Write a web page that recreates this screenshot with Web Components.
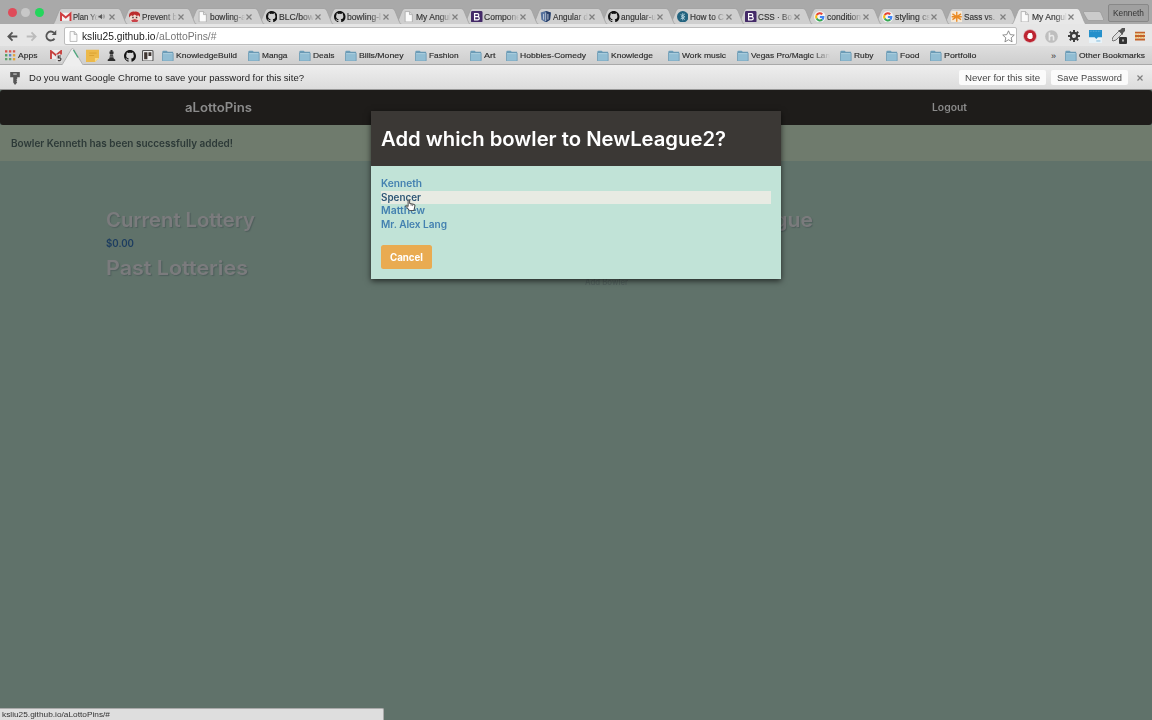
<!DOCTYPE html>
<html lang="en">
<head>
<meta charset="utf-8">
<title>My Angular App</title>
<style>
html,body{margin:0;height:100%;overflow:hidden}
body{font-family:"Liberation Sans",Arial,sans-serif;color:#222}
</style>
</head>
<body>
<browser-window></browser-window>
<script>
const define = (name, html, setup) => {
  const t = document.createElement('template');
  t.innerHTML = html;
  customElements.define(name, class extends HTMLElement {
    connectedCallback() {
      if (this.shadowRoot) return;
      const root = this.attachShadow({mode: 'open'});
      root.append(t.content.cloneNode(true));
      if (setup) setup.call(this, root);
    }
  });
};

/* Icon artwork, keyed by name */
const page = '<path d="M3 .8h6.2L13 4.6v10.6H3z" fill="#fbfbfb" stroke="#a2a2a2"/><path d="M9 1v4h4" fill="#ddd" stroke="#a2a2a2"/>';
const octo = '<path fill="#111" d="M8 0C3.6 0 0 3.6 0 8c0 3.5 2.3 6.500 5.500 7.600.4.1.5-.2.5-.4v-1.500c-2.200.5-2.700-1-2.700-1-.4-.9-.9-1.200-.9-1.200-.7-.5.1-.5.1-.5.8.1 1.200.8 1.200.8.7 1.300 1.900.9 2.300.7.1-.5.3-.9.5-1.100-1.800-.2-3.600-.9-3.600-4 0-.9.3-1.600.8-2.100-.1-.2-.4-1 .1-2.100 0 0 .7-.2 2.200.8a7.500 7.500 0 0 1 4 0c1.500-1 2.200-.8 2.200-.8.4 1.100.2 1.900.1 2.100.5.6.8 1.300.8 2.200 0 3.100-1.900 3.700-3.700 3.900.3.3.6.8.6 1.500v2.200c0 .2.1.5.6.4A8 8 0 0 0 16 8c0-4.400-3.600-8-8-8z"/>';
const google = '<circle cx="8" cy="8" r="8" fill="#f3f3f3"/><g fill="none" stroke-width="2.800"><path d="M3.700 5.500A5 5 0 0 1 11.500 4.500" stroke="#e64335"/><path d="M3.700 5.500a5 5 0 0 0 0 5" stroke="#f7b90a"/><path d="M3.700 10.500a5 5 0 0 0 7.800 1.300" stroke="#35a853"/><path d="M11.500 11.800Q13 10.500 13 8.200H8.200" stroke="#4285f4"/></g>';
const boot = '<rect width="16" height="16" rx="2" fill="#442a68"/><path d="M5 3.500h3.800a2.100 2.100 0 0 1 0 4.200H5zM5 7.700h4.200a2.300 2.300 0 0 1 0 4.600H5z" fill="none" stroke="#fff" stroke-width="1.700"/>';
const gmail = '<path d="M0 2.500h16v11H0z" fill="#f4f2f2"/><path d="M1.400 14V3.500L8 9l6.600-5.500V14" fill="none" stroke="#cf3b3e" stroke-width="2.700"/>';
const ICONS = {
  page, octo, google, boot, gmail,
  prevent: '<rect x="1" y="1" width="14" height="14" rx="3" fill="#f0d9d0"/><path d="M0 9C-1 3 3 0 8 1c5-1 9 3 8 8l-3-3-2 1-3-2-3 2-2-1z" fill="#bb2c2d"/><path d="M3 13l5-2 5 2-2 3H5z" fill="#c9434a"/><path d="M4.500 9h2m3 0h2" stroke="#433" stroke-width="2"/>',
  angular: '<path d="M8 0l7 2-1 10-6 4-6-4L1 2z" fill="#54709b"/><path d="M8 0l7 2-1 10-6 4z" fill="#243c66"/><path d="M5 12V4m6 8V4M8 2v12" stroke="#c7d2e0" stroke-width="1.300"/>',
  howto: '<circle cx="8" cy="8" r="8" fill="#23637f"/><path d="M8 3v10M5 5l6 3-6 3M11 4L6 8l5 4" fill="none" stroke="#b5d4df" stroke-width="1.200"/>',
  sass: '<rect width="16" height="16" rx="2" fill="#f5e9d8"/><path d="M8 1v14M2 4l12 8M14 4L2 12M1 8h14" stroke="#ea8a23" stroke-width="1.900"/>',
  close: '<path d="M3 3l10 10M13 3L3 13" stroke="#7f7f7f" stroke-width="2.400"/>',
  audio: '<path d="M1 6h3l5-4v12l-5-4H1z" fill="#555"/><path d="M11 5q2 3 0 6M13 3q4 5 0 10" fill="none" stroke="#555"/>',
  back: '<path d="M15 8H2M8 2L2 8l6 6" fill="none" stroke="currentColor" stroke-width="2.600"/>',
  fwd: '<path d="M1 8h13M8 2l6 6-6 6" fill="none" stroke="currentColor" stroke-width="2.600"/>',
  reload: '<path d="M12.700 11.500A6 6 0 1 1 12 3.700" fill="none" stroke="#555" stroke-width="2.400"/><path d="M9 6.500h6V0z" fill="#555"/>',
  star: '<path d="M8 1l2.100 4.700 5 .5-3.800 3.400 1.100 5L8 12l-4.400 2.600 1.100-5L.9 6.200l5-.5z" fill="#fff" stroke="#777"/>',
  stop: '<circle cx="8" cy="8" r="7.800" fill="#d9a0a5"/><circle cx="8" cy="8" r="7" fill="#bd2431"/><path d="M5 7.500l1.500-3h3.500l1 3v2.500l-1.500 1.500H7L5 10z" fill="#fff"/>',
  honey: '<circle cx="8" cy="8" r="7.800" fill="#bebebe"/><path d="M5.500 3v10M5.500 8q5-3 5 1v4" fill="none" stroke="#e9e9e9" stroke-width="2"/>',
  gear: '<circle cx="8" cy="8" r="4.200" fill="none" stroke="#3c3c3c" stroke-width="3"/><path d="M8 0v3m0 10v3M0 8h3m10 0h3M2.400 2.400l2 2m7.200 7.200l2 2m0-11.200l-2 2m-7.200 7.200l-2 2" stroke="#3c3c3c" stroke-width="2.600"/>',
  windowy: '<rect width="16" height="16" fill="#2590cb"/><path d="M0 9h7l2 2 2-2h5v7H0z" fill="#e9f3f8"/><path d="M1 1.500h14" stroke="#7bbbe0" stroke-dasharray="1 1"/><path d="M9 13.500h5" fill="none" stroke="#62acd6"/>',
  dropper: '<path d="M0 12l1-3 6-6 3 3-6 6-3 1z" fill="#ddd" stroke="#777"/><path d="M6 2l2 0 2-2 3 0 0 3-2 2 0 2z" fill="#555"/><rect x="7" y="9" width="8" height="7" rx="1" fill="#333"/><rect x="10" y="11.500" width="2" height="2" fill="#aaa"/>',
  menu: '<path d="M0 2.500h16M0 8h16M0 13.500h16" stroke="#c4622b" stroke-width="3"/><path d="M0 5h16M0 10.500h16" stroke="#f0bf65" stroke-width="1.800" stroke-dasharray="3 1"/>',
  folder: '<path d="M.5 2.500q0-1.500 1.500-1.500h4.500L8 2.500h7.500v12H.5z" fill="#6d9fba"/><rect x=".5" y="4" width="15" height="11.500" rx=".7" fill="#91bdd3" stroke="#6792ac" stroke-width=".9"/><path d="M1.500 5h13" stroke="#bad8e6"/>',
  apps: '<g stroke-width="3.600" stroke-dasharray="3.600 2.400"><path d="M0 2h16" stroke="#d9574c"/><path d="M0 8h6" stroke="#53a063"/><path d="M6 8h4" stroke="#5c80cb"/><path d="M12 8h4" stroke="#e0a43d"/><path d="M0 14h10" stroke="#63a36c"/><path d="M12 14h4" stroke="#e0a43d"/></g>',
  gmail5: '<path d="M0 0h16v12H0z" fill="#eee"/><path d="M1.300 12V1.500L8 7l6.700-5.500V9" fill="none" stroke="#c6403e" stroke-width="2.500"/><rect x="8" y="6" width="8" height="10" fill="#ddd"/><path d="M14.500 8H11v2.500q4-.5 3.500 2-.5 2.500-4 1.500" fill="none" stroke="#423b3b" stroke-width="1.600"/>',
  note: '<path d="M0 1h16v10l-5 5H0z" fill="#ecb94a"/><path d="M11 16v-5h5z" fill="#f8d985"/><path d="M4 5h9M4 8h6" stroke="#d69e2e"/>',
  rook: '<path d="M6.500 0h3v2h1.500v3l-1 1 1 6 2.500 2v2h-11v-2l2.500-2 1-6L5 5V2h1.500z" fill="#2e2e2e"/><path d="M5.500 7h5M5 10h6" stroke="#bbb"/>',
  trello: '<rect x=".7" y=".7" width="14.600" height="14.600" rx="1.500" fill="#eee" stroke="#555" stroke-width="1.500"/><path d="M3 3h4.500v10H3zM9 3h4v5.500H9z" fill="#3f3632"/>',
  key: '<path d="M2.500 1h11v6H10.500v2l-1 1 1 1-1 1 1 1-2.500 3-2-3V7H2.500z" fill="#575757"/><path d="M6 3.500h4" stroke="#ddd" stroke-width="1.200"/>',
  hand: '<path d="M5.500 10V1.800q1-1.300 2 0V6l6 1.200q1.500.5 1 2l-1 4.800v1.500h-6L2 9q1-1.500 3.500 1z" fill="#fff" stroke="#222" stroke-width="1.100"/><path d="M9.500 7v2m2-1.500v2" stroke="#222" stroke-width=".8"/>'
};
define('ui-icon', '<style>:host{display:block;flex:none;line-height:0}svg{display:block;width:100%;height:100%}</style><svg viewBox="0 0 16 16"></svg>', function (r) {
  const s = +this.getAttribute('size') || 11;
  this.style.width = this.style.height = s + 'px';
  r.querySelector('svg').innerHTML = ICONS[this.getAttribute('name')];
});

/* One-line label set to a given width: the glyphs are widened, not spaced apart */
define('fit-text', '<style>:host{display:inline-block;white-space:pre;flex:none}span{display:inline-block;transform-origin:0 50%}</style><span><slot></slot></span>', function (r) {
  const s = r.querySelector('span'), w = +this.getAttribute('w');
  const natural = s.getBoundingClientRect().width;
  this.style.width = w + 'px';
  s.style.transform = `scaleX(${w / natural})`;
});

define('browser-tab', `<style>
:host{display:flex;position:relative;align-items:center;box-sizing:border-box;width:68.5px;height:16px;flex:none;padding:1px 0 0 8px;color:#333;font-size:8.500px;-webkit-text-stroke:.15px}
.shape{position:absolute;left:0;top:0;width:76px;height:17px;overflow:visible}
ui-icon,div{position:relative}
.t{width:35px;margin:0 0 0 1.500px;overflow:hidden;-webkit-mask:linear-gradient(90deg,#000 65%,transparent)}
.a .t{width:25px}
.l{display:flex;align-items:center}
</style>
<svg class="shape" viewBox="0 0 76 17"><path class="p" d="M0 16.500C2 16 2 15 3 13L7 3Q8 .5 10 .5H66Q68 .5 69 3L73 13C74 15 74 16 76 16.500" stroke="#a0a0a0" stroke-width=".8"/></svg>
<div class="l"><ui-icon></ui-icon><div class="t"><slot></slot></div></div>`, function (r) {
  const on = this.hasAttribute('active');
  r.querySelector('.p').setAttribute('fill', on ? '#e8e8e8' : '#cfcfcf');
  const ic = r.querySelector('ui-icon'), n = document.createElement('ui-icon');
  n.setAttribute('name', this.getAttribute('icon'));
  n.setAttribute('size', 11.5);
  ic.replaceWith(n);
  const l = r.querySelector('.l'), audio = this.hasAttribute('audio');
  if (audio) { l.classList.add('a'); l.insertAdjacentHTML('beforeend', '<ui-icon name="audio" size="7"></ui-icon>'); }
  l.insertAdjacentHTML('beforeend', '<ui-icon name="close" size="8" style="margin-left:' + (audio ? 3 : 0) + 'px"></ui-icon>');
});

define('tab-strip', `<style>
:host{display:flex;height:24px;box-sizing:border-box;padding-top:8px;background:#a9a9a9;align-items:flex-start;overflow:hidden;flex:none}
.d{display:flex;gap:4.700px;padding-left:7.500px;width:44.500px;height:10px;flex:none}
.d i{width:9px;height:9px;border-radius:50%;flex:none}
.new{width:22px;height:10px;margin:3px 0 0 3.500px;flex:none;position:relative;z-index:50}
.u{box-sizing:border-box;width:41px;height:18px;margin:-4px 0 0 3px;border:1px solid #888;border-radius:2px;background:#a0a0a0;color:#333;font-size:8.500px;text-align:center;line-height:16px;flex:none}
</style>
<div class="d"><i style="background:#df4b59"></i><i style="background:#c8c8c8"></i><i style="background:#24d65c"></i></div>
<div id="tabs" style="display:flex;width:1027.500px;flex:none"></div>
<svg class="new" viewBox="0 0 22 10"><path d="M1 .5h15q1.500 0 2 1.500l2.500 6q.5 1.500-1 1.500H6q-1.500 0-2-1.500L.5 2Q0 .5 1 .5z" fill="#cbcbcb" stroke="#999" stroke-width=".7"/></svg>
<div class="u"><fit-text w="31">Kenneth</fit-text></div>`, function (r) {
  const tabs = [['gmail','Plan Yo',26],['prevent','Prevent b',35],['page','bowling-a',36],['octo','BLC/bowl',37],['octo','bowling-l',34],['page','My Angul',35],['boot','Compone',37],['angular','Angular d',35],['octo','angular-u',35],['howto','How to C',34],['boot','CSS · Bo',34],['google','condition',34],['google','styling cs',36],['sass','Sass vs.',31],['page','My Angul',35]];
  r.getElementById('tabs').innerHTML = tabs.map(([i, t, w], k) =>
    `<browser-tab icon="${i}" ${k ? '' : 'audio'} ${k == 14 ? 'active' : ''} style="z-index:${k == 14 ? 40 : 30 - k}"><fit-text w="${w}">${t}</fit-text></browser-tab>`).join('');
});

define('address-bar', `<style>
:host{display:flex;align-items:center;height:22px;background:#e6e6e6;padding:2.500px 7px 0 7px;box-sizing:border-box;flex:none;color:#555}
.f{display:flex;align-items:center;box-sizing:border-box;width:954px;height:18px;border:1px solid #bdbdbd;border-radius:2px;background:#fff;padding:0 1px 0 3px;font-size:10.500px;color:#222;margin-right:6px}
.g{color:#777}.sp{flex:1}
</style>
<ui-icon name="back" size="11"></ui-icon><ui-icon name="fwd" size="11" style="margin-left:8px;color:#bbb"></ui-icon><ui-icon name="reload" size="12" style="margin:0 7px 0 8px"></ui-icon>
<div class="f"><ui-icon name="page" size="11" style="margin-right:3px"></ui-icon><fit-text w="73.500">ksliu25.github.io</fit-text><fit-text class="g" w="60.500">/aLottoPins/#</fit-text><span class="sp"></span><ui-icon name="star" size="13"></ui-icon></div>
<ui-icon name="stop" size="14"></ui-icon><ui-icon name="honey" size="13" style="margin-left:8px"></ui-icon><ui-icon name="gear" size="12" style="margin-left:10px"></ui-icon><ui-icon name="windowy" size="13" style="margin-left:9px"></ui-icon><ui-icon name="dropper" size="16" style="margin-left:10px"></ui-icon><ui-icon name="menu" size="10" style="margin-left:7px"></ui-icon>`);

define('book-mark', `<style>:host{display:flex;align-items:center;flex:none;height:14px;gap:2.500px;color:#2b2b2b;font-size:8px;-webkit-text-stroke:.15px}</style><ui-icon></ui-icon><slot></slot>`, function (r) {
  this.style.width = this.getAttribute('span') + 'px';
  const ic = r.querySelector('ui-icon'), n = document.createElement('ui-icon');
  n.setAttribute('name', this.getAttribute('icon') || 'folder');
  n.setAttribute('size', this.getAttribute('size') || 11.5);
  ic.replaceWith(n);
});

define('bookmarks-bar', `<style>
:host{display:flex;align-items:center;height:19px;box-sizing:border-box;background:linear-gradient(#dedede,#cecece);border-bottom:1px solid #a9a9a9;padding:1px 0 0 5px;flex:none;position:relative}
.m{-webkit-mask:linear-gradient(90deg,#000 78%,transparent)}
.c{width:14px;font-size:9px;color:#333}
.tri{position:absolute;left:62px;top:2px;width:22px;height:18px}
</style>
<svg class="tri" viewBox="0 0 22 18"><path d="M0 17L9.500 1Q10.500 0 11.500 1L21 17v1H0z" fill="#eeeeee" stroke="#aaa" stroke-width=".8"/><path d="M0 17.600h22" stroke="#eee" stroke-width="1.500"/><path d="M11.500 2l4.500 7.500" stroke="#49a77c" stroke-width="1.300"/></svg>`, function (r) {
  const b = [['apps',45,'Apps',19.5,10.5],['gmail5',36,'',0,12],['note',20,'',0,13],['rook',17.5,'',0,11],['octo',18.5,'',0,12],['trello',20,'',0,11.5],
  ['',86,'KnowledgeBuild',61],['',51,'Manga',25.5],['',46,'Deals',21.5],['',70,'Bills/Money',44.5],['',55,'Fashion',29.5],['',36,'Art',11.5],['',91,'Hobbies-Comedy',66],['',71,'Knowledge',42],['',69,'Work music',44],['',103,'Vegas Pro/Magic Lan',79],['',46,'Ruby',19.5],['',44,'Food',19.5],['',121,'Portfolio',32.5]];
  r.querySelector('svg').insertAdjacentHTML('afterend', b.map(([i, s, t, w, z]) => `<book-mark icon="${i}" span="${s}" size="${z || ''}">${t ? `<fit-text ${t[0] == 'V' ? 'class="m"' : ''} w="${w}">${t}</fit-text>` : ''}</book-mark>`).join('') +
    '<span class="c">»</span><book-mark span="85"><fit-text w="66">Other Bookmarks</fit-text></book-mark>');
});

define('password-bar', `<style>
:host{display:flex;align-items:center;height:25px;box-sizing:border-box;background:linear-gradient(#eeeeee,#dcdcdc);border-bottom:1px solid #999;padding:1px 8px 0 8px;color:#222;font-size:9.500px;flex:none}
.s{flex:1}b{font-weight:400;display:flex;align-items:center;height:15px;background:#fbfbfb;border-radius:2px;padding:0 6px;margin-right:5px;color:#444}
</style><ui-icon name="key" size="14" style="margin-right:7px"></ui-icon><fit-text w="275">Do you want Google Chrome to save your password for this site?</fit-text><span class="s"></span><b><fit-text w="75">Never for this site</fit-text></b><b><fit-text w="65">Save Password</fit-text></b><ui-icon name="close" size="8" style="margin-left:3px"></ui-icon>`);

define('nav-bar', `<style>
:host{display:flex;align-items:center;justify-content:space-between;height:35px;box-sizing:border-box;background:#1e1c1a;border-radius:3px;padding:0 185px 1px;color:#8b8b8b;font-weight:600;font-size:12.500px;flex:none}
.o{font-size:10px}
</style><fit-text w="67">aLottoPins</fit-text><fit-text class="o" w="35">Logout</fit-text>`);

define('flash-message', `<style>:host{display:flex;align-items:center;height:36px;box-sizing:border-box;padding:0 11px;background:#6f7b6d;color:#2d3a38;font-weight:600;font-size:9.800px;flex:none}</style>`, function (r) {
  const f = document.createElement('fit-text');
  f.setAttribute('w', 222);
  f.textContent = this.textContent.trim();
  r.append(f);
});

define('lottery-page', `<style>
:host{display:grid;grid-template-columns:478px 1fr;flex:1;align-content:start;padding:43px 106px 0;color:#7b7b7d;font-family:Inter,sans-serif}
h2{margin:0;font-size:20px;line-height:32px;height:32px;font-weight:600;text-shadow:1px 1px 1px #50605d}
p{margin:0;height:16px;line-height:15px;font-size:9.800px;font-weight:600;color:#1d3d60}
.r{display:flex;flex-direction:column}
.r h2{align-self:start;padding-left:80px}
.x{margin-top:40px;font-size:9px;color:#53625f;font-weight:500;padding-left:1px;line-height:12px}
</style>
<div><h2><fit-text w="149">Current Lottery</fit-text></h2><p><fit-text w="28">$0.00</fit-text></p><h2><fit-text w="142">Past Lotteries</fit-text></h2></div>
<div class="r"><h2><fit-text w="149">Create League</fit-text></h2><div class="x"><fit-text w="43">Add Bowler</fit-text></div></div>`);

define('bowler-modal', `<style>
:host{display:block;width:410px;height:168px;position:absolute;left:371px;top:111px;background:#c1e3d7;box-shadow:0 2px 6px rgba(0,0,0,.65);font-family:Inter,sans-serif}
header{height:55px;display:flex;align-items:center;padding:0 10px;background:#3b3835;color:#fff;font-weight:600;font-size:19.500px}
ul{list-style:none;margin:0;padding:11px 10px 0}
li{height:13.700px;line-height:14.500px;font-size:9.800px;font-weight:600;color:#4481b0}
li.h{background:#e8ebe3;color:#2d5575}
.b{display:flex;align-items:center;justify-content:center;width:51px;height:24px;margin:13px 10px 0;background:#e9ab51;border-radius:2.500px;color:#fff;font-size:10px;font-weight:700}
.c{position:absolute;left:33px;top:88px}
</style>
<header><fit-text w="345">Add which bowler to NewLeague2?</fit-text></header>
<ul><li><fit-text w="41">Kenneth</fit-text></li><li class="h"><fit-text w="40">Spencer</fit-text></li><li><fit-text w="44">Matthew</fit-text></li><li><fit-text w="66">Mr. Alex Lang</fit-text></li></ul>
<div class="b"><fit-text w="33">Cancel</fit-text></div><ui-icon class="c" name="hand" size="12"></ui-icon>`);

define('status-bubble', `<style>:host{position:absolute;left:0;bottom:0;display:flex;align-items:center;width:384px;height:12px;box-sizing:border-box;padding-left:2px;background:#dedede;border:1px solid #aaa;border-left:0;border-bottom:0;border-radius:0 2px 0 0;color:#333;font-size:7.500px}</style><fit-text w="108">ksliu25.github.io/aLottoPins/#</fit-text>`);

define('browser-window', `<style>
:host{display:flex;flex-direction:column;position:relative;width:1152px;height:720px;background:#60726a;overflow:hidden}
nav-bar,flash-message{font-family:Inter,sans-serif}
</style><tab-strip></tab-strip><address-bar></address-bar><bookmarks-bar></bookmarks-bar><password-bar></password-bar><nav-bar></nav-bar><flash-message>Bowler Kenneth has been successfully added!</flash-message><lottery-page></lottery-page><bowler-modal></bowler-modal><status-bubble></status-bubble>`);
</script>
</body>
</html>
